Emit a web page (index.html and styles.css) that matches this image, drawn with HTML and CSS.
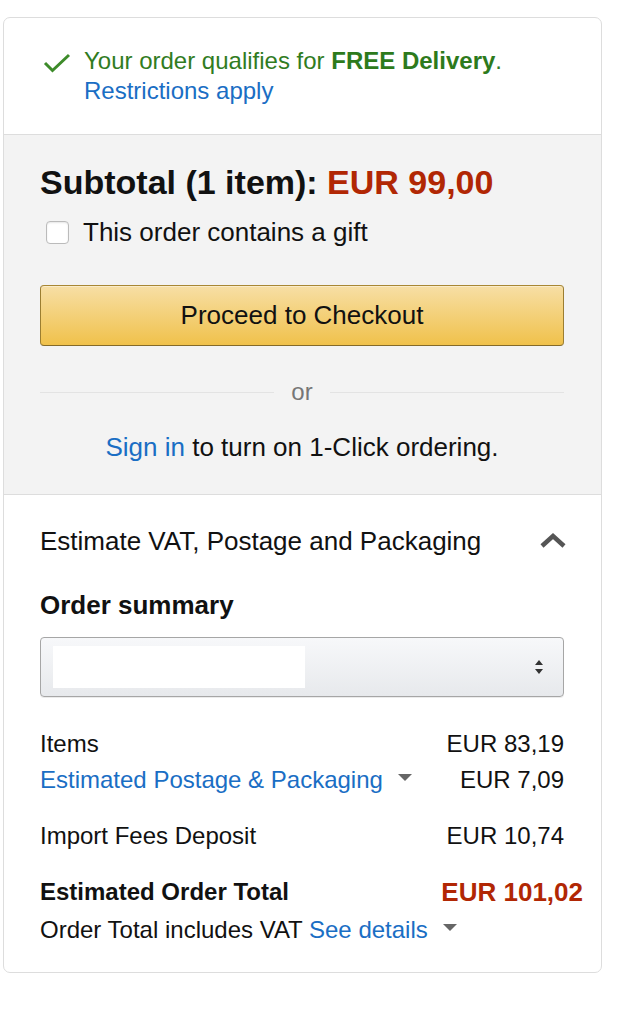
FILE: index.html
```html
<!DOCTYPE html>
<html>
<head>
<meta charset="utf-8">
<link rel="stylesheet" href="styles.css">
</head>
<body>
<div class="card">
  <section class="sec free">
    <svg class="check" width="28" height="20" viewBox="0 0 28 20"><path d="M2 10 L9.5 17.5 L26 2" fill="none" stroke="#3d8b2a" stroke-width="3"/></svg>
    <div class="free-text">
      <div class="green">Your order qualifies for <b>FREE Delivery</b>.</div>
      <a class="link">Restrictions apply</a>
    </div>
  </section>
  <section class="sec gray">
    <div class="subtotal">Subtotal (1 item): <span class="red">EUR 99,00</span></div>
    <label class="gift"><span class="box"></span>This order contains a gift</label>
    <div class="btn">Proceed to Checkout</div>
    <div class="or"><span class="line"></span><span class="or-t">or</span><span class="line"></span></div>
    <div class="signin"><a class="link">Sign in</a> to turn on 1-Click ordering.</div>
  </section>
  <section class="sec summary">
    <div class="est-head"><span>Estimate VAT, Postage and Packaging</span>
      <svg width="28" height="18" viewBox="0 0 28 18"><path d="M3 14 L14 4 L25 14" fill="none" stroke="#555" stroke-width="4.5"/></svg>
    </div>
    <div class="os">Order summary</div>
    <div class="select"><span class="blank"></span>
      <svg class="updown" width="10" height="18" viewBox="0 0 10 18"><path d="M1 7 L5 2 L9 7 Z M1 11 L5 16 L9 11 Z" fill="#333"/></svg>
    </div>
    <div class="row r1"><span>Items</span><span>EUR 83,19</span></div>
    <div class="row r2"><span><a class="link">Estimated Postage &amp; Packaging</a><span class="tri"></span></span><span>EUR 7,09</span></div>
    <div class="row r3"><span>Import Fees Deposit</span><span>EUR 10,74</span></div>
    <div class="row r4"><span class="b">Estimated Order Total</span><span class="total red">EUR 101,02</span></div>
    <div class="vat">Order Total includes VAT <a class="link">See details</a><span class="tri"></span></div>
  </section>
</div>
</body>
</html>
```
FILE: styles.css
```css
* { box-sizing: border-box; }
html, body { margin: 0; padding: 0; background: #fff; }
body {
  font-family: "Liberation Sans", Arial, sans-serif;
  font-size: 24px;
  line-height: 30px;
  color: #111;
  padding: 17px 22px 0 3px;
}
.card {
  width: 599px;
  border: 1px solid #ddd;
  border-radius: 7px;
}
.sec { padding: 0 37px 0 36px; }
.free {
  display: flex;
  padding-top: 28px;
  height: 117px;
  border-bottom: 1px solid #ddd;
}
.check { margin: 7px 13px 0 3px; flex: none; }
.green { color: #317c1f; }
.green b { color: #2d7a1c; }
.link { color: #1a6ec4; text-decoration: none; }
.gray {
  background: #f3f3f3;
  height: 360px;
  padding-top: 31px;
  border-bottom: 1px solid #ddd;
  font-size: 26px;
}
.subtotal {
  font-weight: bold;
  font-size: 34px;
  line-height: 32px;
}
.red { color: #b12704; }
.gift {
  display: flex;
  align-items: center;
  margin-top: 19px;
  line-height: 30px;
}
.box {
  width: 23px; height: 23px;
  border: 1px solid #bbb;
  border-radius: 4px;
  background: #fff;
  margin: 0 14px 0 6px;
  box-shadow: inset 0 1px 2px rgba(0,0,0,.1);
}
.btn {
  margin-top: 38px;
  height: 61px;
  border: 1px solid;
  border-color: #a88734 #9c7e31 #846a29;
  border-radius: 4px;
  background: linear-gradient(#f7dfa5, #f0c14b);
  text-align: center;
  line-height: 59px;
  box-shadow: inset 0 1px 0 rgba(255,255,255,.4);
}
.or {
  display: flex;
  align-items: center;
  margin-top: 31px;
  color: #767676;
  height: 30px;
  font-size: 24px;
}
.line { flex: 1; height: 1px; background: #e3e3e3; }
.or-t { padding: 0 17px; }
.signin {
  text-align: center;
  margin-top: 25px;
}
.summary { padding-top: 31px; height: 477px; }
.est-head {
  display: flex;
  justify-content: space-between;
  align-items: center;
  font-size: 26px;
}
.est-head svg { margin-right: -3px; }
.os {
  font-weight: bold;
  font-size: 26px;
  margin-top: 34px;
}
.select {
  margin-top: 17px;
  height: 60px;
  border: 1px solid #a6a6a6;
  border-radius: 4px;
  background: linear-gradient(#f7f8fa, #e7e9ec);
  display: flex;
  align-items: center;
  justify-content: space-between;
  padding: 0 19px 0 12px;
  box-shadow: 0 1px 0 rgba(0,0,0,.08);
}
.blank { width: 252px; height: 42px; background: #fff; }
.row {
  display: flex;
  justify-content: space-between;
  align-items: center;
}
.r1 { margin-top: 32px; }
.r2 { margin-top: 6px; }
.r3 { margin-top: 26px; }
.r4 { margin-top: 26px; }
.b { font-weight: bold; }
.total { font-weight: bold; font-size: 26px; margin-right: -19px; }
.tri {
  display: inline-block;
  width: 0; height: 0;
  border-left: 7px solid transparent;
  border-right: 7px solid transparent;
  border-top: 7px solid #666;
  vertical-align: middle;
  margin-left: 15px;
  position: relative;
  top: -4px;
}
.vat { margin-top: 8px; }
```
